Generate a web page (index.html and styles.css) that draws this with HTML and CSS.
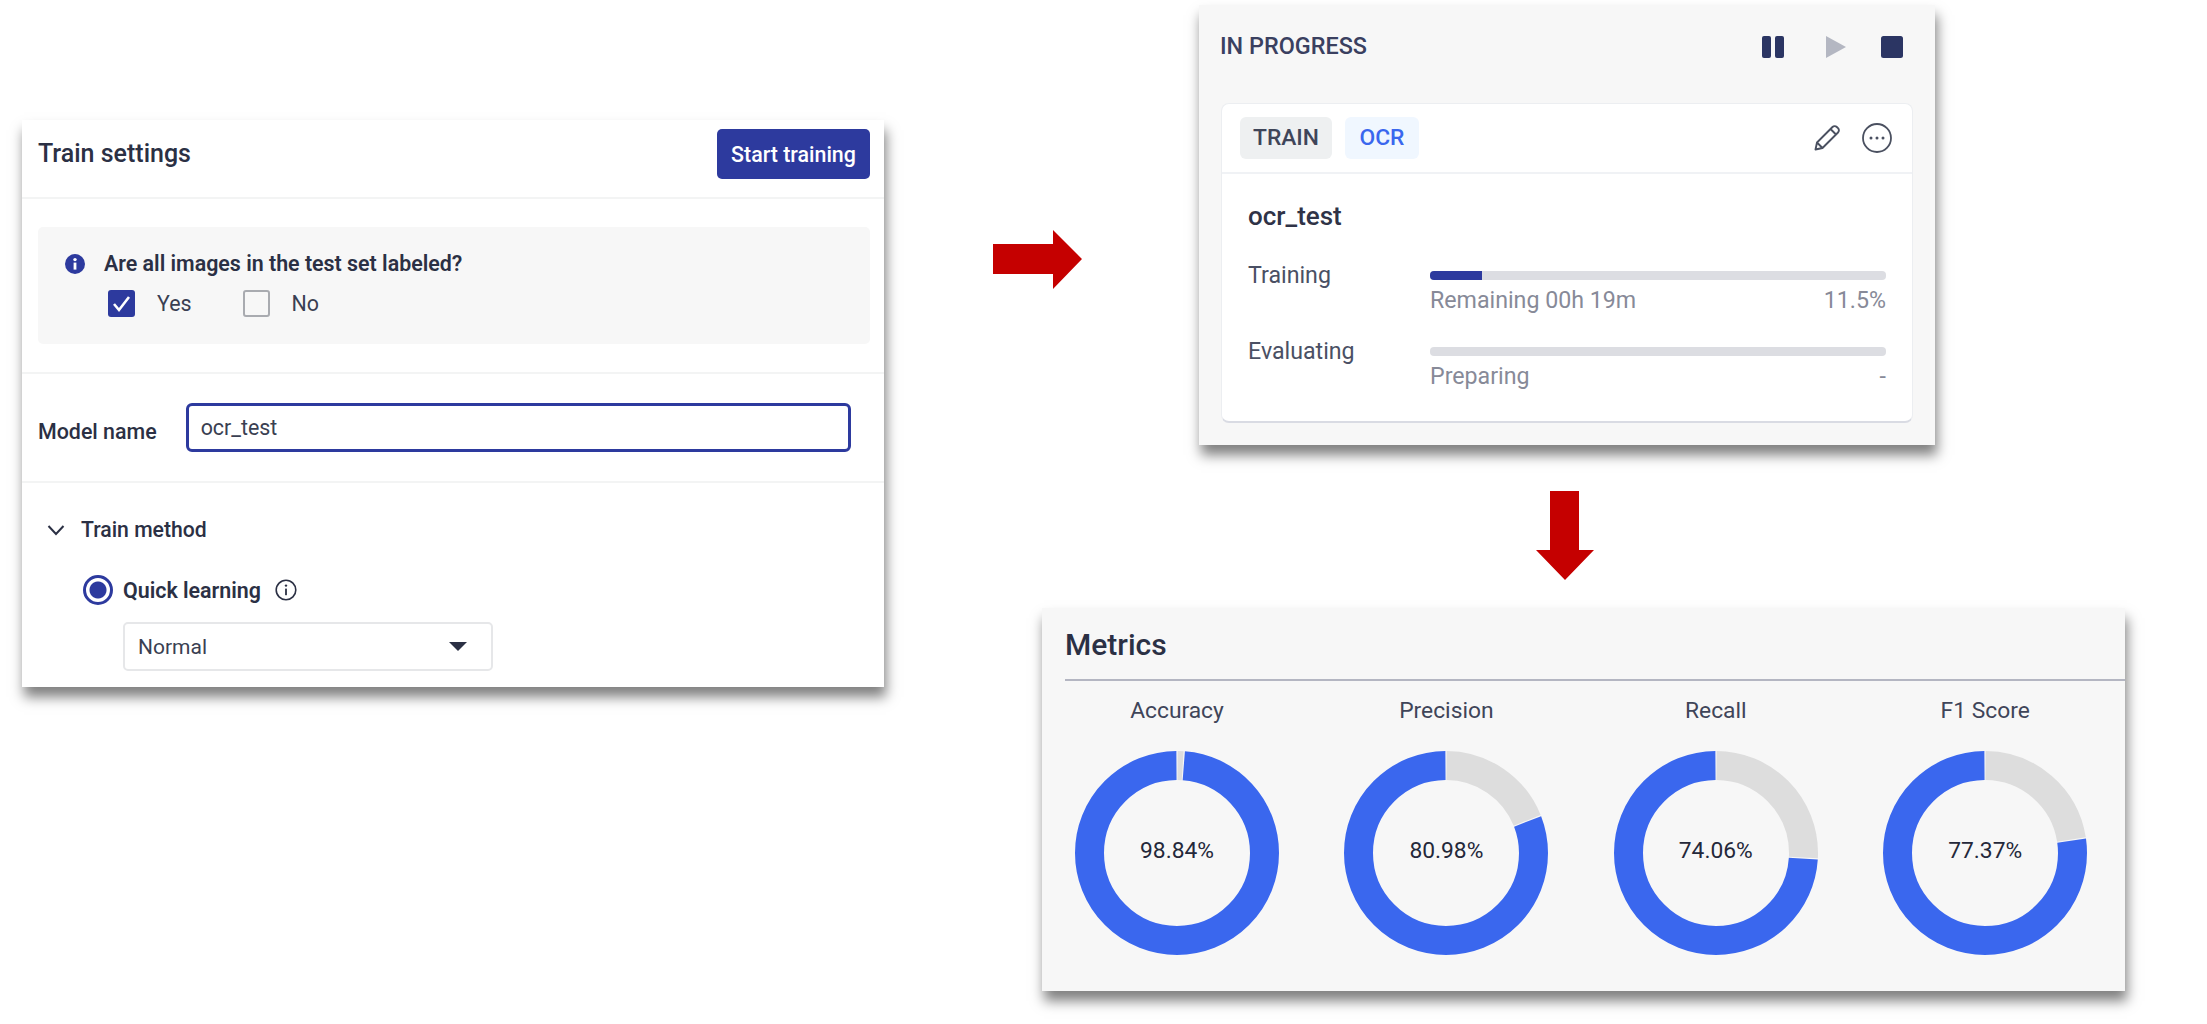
FILE: index.html
```html
<!DOCTYPE html>
<html lang="en">
<head>
    <meta charset="UTF-8">
    <meta name="viewport" content="width=device-width, initial-scale=1.0">
    <title>OCR training flow</title>
    <link rel="stylesheet" href="styles.css">
</head>
<body>
    <section class="panel settings">
        <header class="settings-head">
            <h2>Train settings</h2>
            <button class="start-btn">Start training</button>
        </header>

        <div class="settings-section question-section">
            <div class="question-box">
                <div class="question">
                    <svg class="info-solid" viewBox="0 0 20 20"><circle cx="10" cy="10" r="10" fill="#2d3a9e"/><rect x="8.6" y="8.6" width="2.8" height="7" fill="#fff"/><circle cx="10" cy="5.6" r="1.7" fill="#fff"/></svg>
                    <span>Are all images in the test set labeled?</span>
                </div>
                <div class="choices">
                    <label class="choice">
                        <svg class="check-on" viewBox="0 0 27 27"><rect width="27" height="27" rx="3" fill="#2d3a9e"/><path d="M6 14l5 6 10-13" fill="none" stroke="#fff" stroke-width="2.6"/></svg>
                        Yes
                    </label>
                    <label class="choice">
                        <span class="check-off"></span>
                        No
                    </label>
                </div>
            </div>
        </div>

        <div class="settings-section name-section">
            <span class="name-label">Model name</span>
            <div class="name-input">ocr_test</div>
        </div>

        <div class="method-section">
            <div class="method-title">
                <svg class="chevron" viewBox="0 0 18 12"><path d="M1.5 2l7.5 8 7.5-8" fill="none" stroke="#2b3044" stroke-width="2"/></svg>
                <span>Train method</span>
            </div>
            <div class="method-option">
                <span class="radio"></span>
                <span class="option-name">Quick learning</span>
                <svg class="info-line" viewBox="0 0 22 22"><circle cx="11" cy="11" r="9.8" fill="none" stroke="#2b3044" stroke-width="1.6"/><rect x="10.1" y="9.6" width="1.8" height="6.6" fill="#2b3044"/><circle cx="11" cy="6.6" r="1.2" fill="#2b3044"/></svg>
            </div>
            <div class="method-select">
                <span>Normal</span>
                <svg class="caret" viewBox="0 0 18 9"><path d="M0 0h18L9 9z" fill="#2b3044"/></svg>
            </div>
        </div>
    </section>

    <svg class="arrow arrow-right" viewBox="0 0 89 59"><path d="M0 14h60V0l29 29-29 30V44H0z" fill="#c50000"/></svg>

    <section class="panel progress">
        <header class="progress-head">
            <h3>IN PROGRESS</h3>
            <div class="controls">
                <svg viewBox="0 0 22 22"><rect width="9" height="22" rx="2" fill="#2b3563"/><rect x="13" width="9" height="22" rx="2" fill="#2b3563"/></svg>
                <svg class="play" viewBox="0 0 22 22"><path d="M1 0l20 11L1 22z" fill="#b4b7c2"/></svg>
                <svg viewBox="0 0 22 22"><rect width="22" height="22" rx="2.5" fill="#2b3563"/></svg>
            </div>
        </header>

        <div class="job-card">
            <div class="job-head">
                <span class="chip chip-train">TRAIN</span>
                <span class="chip chip-ocr">OCR</span>
                <div class="job-actions">
                    <svg class="pencil" viewBox="0 0 28 28"><path d="M2.5 25.5l1.5-7L19.5 3a3 3 0 0 1 4.3 0l1.2 1.200a3 3 0 0 1 0 4.300L9.500 24z M4 18.500l5.500 5.500 M17.500 5l5.500 5.500" fill="none" stroke="#4a5060" stroke-width="1.9" stroke-linejoin="round"/></svg>
                    <svg class="more" viewBox="0 0 30 30"><circle cx="15" cy="15" r="14" fill="none" stroke="#4a5060" stroke-width="1.800"/><circle cx="9" cy="15" r="1.500" fill="#4a5060"/><circle cx="15" cy="15" r="1.500" fill="#4a5060"/><circle cx="21" cy="15" r="1.500" fill="#4a5060"/></svg>
                </div>
            </div>
            <div class="job-body">
                <div class="job-name">ocr_test</div>
                <div class="stage">
                    <span class="stage-name">Training</span>
                    <div class="stage-detail">
                        <div class="bar"><div class="bar-fill" style="width: 11.5%"></div></div>
                        <div class="stage-meta"><span>Remaining 00h 19m</span><span>11.5%</span></div>
                    </div>
                </div>
                <div class="stage">
                    <span class="stage-name">Evaluating</span>
                    <div class="stage-detail">
                        <div class="bar"></div>
                        <div class="stage-meta"><span>Preparing</span><span>-</span></div>
                    </div>
                </div>
            </div>
        </div>
    </section>

    <svg class="arrow arrow-down" viewBox="0 0 58 89"><path d="M14 0h29v59h15L29 89 0 59h14z" fill="#c50000"/></svg>

    <section class="panel metrics">
        <h2 class="metrics-title">Metrics</h2>
        <div class="metrics-row">
            <div class="metric">
                <div class="metric-name">Accuracy</div>
                <div class="donut">
                    <svg viewBox="0 0 204 204">
                        <circle class="ring-rest" cx="102" cy="102" r="87.5" pathLength="100" stroke-dasharray="0.96 100" stroke-dashoffset="-0.1"/>
                        <circle class="ring-value" cx="102" cy="102" r="87.500" pathLength="100" stroke-dasharray="98.64 100" stroke-dashoffset="-1.26"/>
                    </svg>
                    <span class="donut-value">98.84%</span>
                </div>
            </div>
            <div class="metric">
                <div class="metric-name">Precision</div>
                <div class="donut">
                    <svg viewBox="0 0 204 204">
                        <circle class="ring-rest" cx="102" cy="102" r="87.5" pathLength="100" stroke-dasharray="18.82 100" stroke-dashoffset="-0.1"/>
                        <circle class="ring-value" cx="102" cy="102" r="87.5" pathLength="100" stroke-dasharray="80.78 100" stroke-dashoffset="-19.12"/>
                    </svg>
                    <span class="donut-value">80.98%</span>
                </div>
            </div>
            <div class="metric">
                <div class="metric-name">Recall</div>
                <div class="donut">
                    <svg viewBox="0 0 204 204">
                        <circle class="ring-rest" cx="102" cy="102" r="87.5" pathLength="100" stroke-dasharray="25.74 100" stroke-dashoffset="-0.1"/>
                        <circle class="ring-value" cx="102" cy="102" r="87.5" pathLength="100" stroke-dasharray="73.86 100" stroke-dashoffset="-26.04"/>
                    </svg>
                    <span class="donut-value">74.06%</span>
                </div>
            </div>
            <div class="metric">
                <div class="metric-name">F1 Score</div>
                <div class="donut">
                    <svg viewBox="0 0 204 204">
                        <circle class="ring-rest" cx="102" cy="102" r="87.5" pathLength="100" stroke-dasharray="22.43 100" stroke-dashoffset="-0.1"/>
                        <circle class="ring-value" cx="102" cy="102" r="87.5" pathLength="100" stroke-dasharray="77.17 100" stroke-dashoffset="-22.73"/>
                    </svg>
                    <span class="donut-value">77.37%</span>
                </div>
            </div>
        </div>
    </section>
</body>
</html>
```

FILE: styles.css
```css
* {
    box-sizing: border-box;
}

body {
    margin: 0;
    height: 1024px;
    position: relative;
    overflow: hidden;
    background: #fff;
    color: #2b3044;
    font-family: Roboto, "Liberation Sans", sans-serif;
}

h2, h3 {
    margin: 0;
}

/* the slide: three screenshots and two arrows placed on a free canvas */
.panel {
    position: absolute;
    box-shadow: 2px 10px 12px rgba(0, 0, 0, 0.5);
}

.arrow {
    position: absolute;
}

.arrow-right {
    left: 993px;
    top: 230px;
    width: 89px;
    height: 59px;
}

.arrow-down {
    left: 1536px;
    top: 491px;
    width: 58px;
    height: 89px;
}

/* train settings */
.settings {
    left: 22px;
    top: 120px;
    width: 862px;
    height: 567px;
    background: #fff;
}

.settings-head {
    height: 79px;
    padding: 9px 14px 0 16px;
    display: flex;
    justify-content: space-between;
    align-items: flex-start;
    border-bottom: 2px solid #f3f4f4;
}

.settings-head h2 {
    font-size: 25px;
    font-weight: 500;
    line-height: 50px;
}

.start-btn {
    width: 153px;
    height: 50px;
    border: none;
    border-radius: 5px;
    background: #2d3a9e;
    color: #fff;
    font-family: inherit;
    font-size: 21.4px;
    font-weight: 500;
}

.question-section {
    height: 175px;
    padding: 28px 14px 0 16px;
    border-bottom: 2px solid #f3f4f4;
}

.question-box {
    height: 117px;
    padding: 26px 27px 0;
    background: #f7f7f7;
    border-radius: 5px;
}

.question {
    display: flex;
    align-items: center;
    gap: 19px;
    font-size: 21.4px;
    font-weight: 600;
    line-height: 22px;
}

.info-solid {
    width: 20px;
    height: 20px;
}

.choices {
    display: flex;
    gap: 51px;
    margin-top: 15px;
    padding-left: 43px;
}

.choice {
    display: flex;
    align-items: center;
    gap: 22px;
    font-size: 21.4px;
    color: #3a3f52;
}

.check-on {
    width: 27px;
    height: 27px;
}

.check-off {
    width: 27px;
    height: 27px;
    border: 2px solid #a9abb0;
    border-radius: 3px;
    background: #f7f7f7;
}

.name-section {
    height: 109px;
    padding: 29px 33px 0 16px;
    display: flex;
    align-items: flex-start;
    gap: 29px;
    border-bottom: 2px solid #f3f4f4;
}

.name-label {
    font-size: 21.4px;
    font-weight: 500;
    line-height: 58px;
    white-space: nowrap;
}

.name-input {
    flex: 1;
    height: 49px;
    padding: 0 12px;
    border: 3px solid #2d3a9e;
    border-radius: 6px;
    font-size: 21.4px;
    line-height: 43px;
    color: #3a3f52;
}

.method-section {
    padding: 34px 0 0 25px;
}

.method-title {
    display: flex;
    align-items: center;
    gap: 16px;
    font-size: 21.2px;
    font-weight: 500;
    line-height: 26px;
}

.chevron {
    width: 18px;
    height: 12px;
}

.method-option {
    display: flex;
    align-items: center;
    margin: 32px 0 0 36px;
    font-size: 21.4px;
    font-weight: 600;
}

.radio {
    width: 30px;
    height: 30px;
    margin-right: 10px;
    border: 3px solid #2d3a9e;
    border-radius: 50%;
    background: radial-gradient(circle, #2d3a9e 0 8px, #fff 9px);
}

.info-line {
    width: 22px;
    height: 22px;
    margin-left: 14px;
}

.method-select {
    width: 370px;
    height: 49px;
    margin: 17px 0 0 76px;
    padding: 0 24px 0 13px;
    display: flex;
    justify-content: space-between;
    align-items: center;
    border: 2px solid #e6e7e9;
    border-radius: 5px;
    font-size: 21px;
    color: #3a3f52;
}

.caret {
    width: 18px;
    height: 9px;
}

/* in progress */
.progress {
    left: 1199px;
    top: 5px;
    width: 736px;
    height: 440px;
    padding: 0 22px 22px;
    background: #f7f7f7;
}

.progress-head {
    height: 98px;
    padding: 31px 10px 0 0;
    display: flex;
    justify-content: space-between;
    align-items: flex-start;
}

.progress-head h3 {
    font-size: 23.4px;
    font-weight: 500;
    line-height: 20px;
    color: #3a4060;
    margin-left: -1px;
}

.controls {
    display: flex;
    gap: 34px;
}

.controls svg {
    width: 22px;
    height: 22px;
}

.controls .play {
    margin-left: 7px;
}

.job-card {
    height: 320px;
    background: #fff;
    border: 1px solid #eceef1;
    border-bottom: 2px solid #d9dbe3;
    border-radius: 8px;
}

.job-head {
    height: 70px;
    padding: 0 20px 0 18px;
    display: flex;
    align-items: center;
    gap: 13px;
    border-bottom: 2px solid #f0f2f5;
}

.chip {
    height: 42px;
    border-radius: 6px;
    font-size: 22.8px;
    font-weight: 500;
    line-height: 42px;
    text-align: center;
}

.chip-train {
    width: 92px;
    background: #eef0f1;
    color: #3f4559;
}

.chip-ocr {
    width: 74px;
    background: #f0f7ff;
    color: #3a67ee;
}

.job-actions {
    margin-left: auto;
    display: flex;
    align-items: center;
    gap: 21px;
}

.pencil {
    width: 28px;
    height: 28px;
}

.more {
    width: 30px;
    height: 30px;
}

.job-body {
    padding: 27px 26px 0;
}

.job-name {
    font-size: 26px;
    font-weight: 500;
    line-height: 30px;
    color: #2f3347;
}

.stage {
    display: flex;
    margin-top: 35px;
    height: 54px;
}

.stage + .stage {
    margin-top: 22px;
}

.stage-name {
    width: 182px;
    font-size: 23.2px;
    line-height: 18px;
    color: #4a5064;
}

.stage-detail {
    flex: 1;
}

.bar {
    height: 9px;
    margin-top: 5px;
    background: #dcdde2;
    border-radius: 4px;
    overflow: hidden;
}

.bar-fill {
    height: 100%;
    background: #2d3a9e;
}

.stage-meta {
    margin-top: 7px;
    display: flex;
    justify-content: space-between;
    font-size: 23.2px;
    line-height: 26px;
    color: #878a98;
}

/* metrics */
.metrics {
    left: 1042px;
    top: 608px;
    width: 1083px;
    height: 383px;
    padding-left: 23px;
    background: #f7f7f7;
}

.metrics-title {
    height: 73px;
    padding-top: 18px;
    font-size: 30px;
    font-weight: 500;
    line-height: 38px;
    color: #2b3044;
    border-bottom: 2px solid #b4b6c2;
}

.metrics-row {
    display: flex;
    padding: 17px 0 0 10px;
    gap: 65.4px;
}

.metric {
    width: 204px;
    text-align: center;
}

.metric-name {
    font-size: 22.8px;
    line-height: 26px;
    color: #3f4559;
}

.donut {
    margin-top: 27px;
    width: 204px;
    height: 204px;
    display: grid;
    place-items: center;
}

.donut svg, .donut-value {
    grid-area: 1 / 1;
}

.donut svg {
    width: 204px;
    height: 204px;
    transform: rotate(-90deg);
}

.ring-rest, .ring-value {
    fill: none;
    stroke-width: 29;
}

.ring-rest {
    stroke: #dddddd;
}

.ring-value {
    stroke: #3a67ee;
}

.donut-value {
    margin-bottom: 5px;
    font-size: 22.8px;
    color: #24283a;
}
```
